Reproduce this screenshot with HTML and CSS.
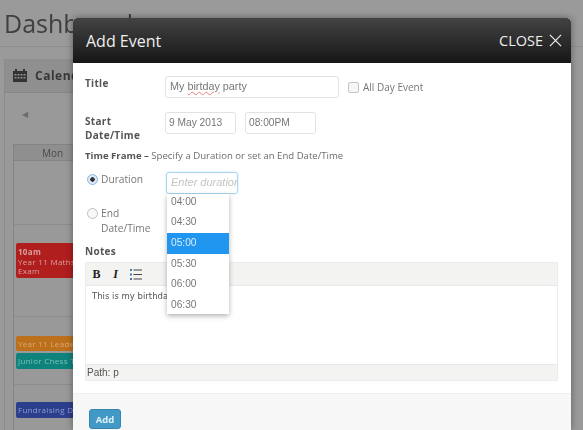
FILE: index.html
```html
<!DOCTYPE html>
<html>
<head>
    <title>Add Event</title>
    <link rel="stylesheet" href="styles.css">
</head>
<body>
    <div class="page">
        <header class="page-head">
            <h1>Dashboard</h1>
        </header>
        <section class="panel">
            <div class="panel-head">
                <svg class="cal-icon" viewBox="0 0 14 13" width="14" height="13">
                    <path fill="#333" d="M0 2h2V0h2v2h6V0h2v2h2v11H0z"/>
                    <path fill="#8f8f8f" d="M1.500 5h2v1.500h-2zM4.500 5h2v1.500h-2zM7.500 5h2v1.500h-2zM10.500 5h2v1.500h-2zM1.500 8h2v1.500h-2zM4.500 8h2v1.500h-2zM7.500 8h2v1.500h-2zM10.500 8h2v1.500h-2z"/>
                </svg>
                <span>Calendar</span>
            </div>
            <div class="cal-nav">&#9664;</div>
            <div class="cal-day">Mon</div>
            <div class="cal-col">
                <div class="slot slot-a"></div>
                <div class="event event-red"><b>10am</b><br>Year 11 Maths<br>Exam</div>
                <div class="slot slot-b"></div>
                <div class="event event-orange">Year 11 Leadership</div>
                <div class="event event-teal">Junior Chess Tournament</div>
                <div class="slot slot-c"></div>
                <div class="event event-blue">Fundraising Drive</div>
            </div>
        </section>
    </div>

    <div class="modal">
        <div class="modal-head">
            <h2>Add Event</h2>
            <span class="close">CLOSE
                <svg viewBox="0 0 14 14" width="13" height="13"><path d="M1 1l12 12M13 1L1 13" stroke="#eee" stroke-width="1.300" fill="none"/></svg>
            </span>
        </div>
        <form class="modal-body" action="javascript:void(0)">
            <div class="row row-title">
                <label class="field-label">Title</label>
                <div class="text-box title-box">My <span class="typo">birtday</span> party</div>
                <span class="check"></span>
                <span class="check-text">All Day Event</span>
            </div>
            <div class="row row-start">
                <label class="field-label">Start<br>Date/Time</label>
                <div class="text-box date-box">9 May 2013</div>
                <div class="text-box date-box">08:00PM</div>
            </div>
            <p class="hint"><b>Time Frame &#8211;</b> Specify a Duration or set an End Date/Time</p>
            <div class="row row-duration">
                <label class="radio-label"><span class="radio radio-on"></span>Duration</label>
                <div class="text-box duration-box">Enter duration</div>
                <ul class="menu">
                    <li>04:00</li>
                    <li>04:30</li>
                    <li class="active">05:00</li>
                    <li>05:30</li>
                    <li>06:00</li>
                    <li>06:30</li>
                </ul>
            </div>
            <div class="row row-end">
                <label class="radio-label"><span class="radio"></span>End<br>Date/Time</label>
            </div>
            <label class="field-label notes-label">Notes</label>
            <div class="editor">
                <div class="toolbar">
                    <span class="tool tool-b">B</span>
                    <span class="tool tool-i">I</span>
                    <svg viewBox="0 0 12 11" width="12" height="11">
                        <path fill="#4a76b8" d="M0 0h2v2H0zM0 4.500h2v2H0zM0 9h2v2H0z"/>
                        <path fill="#444" d="M3.500 .5H12v1H3.500zM3.500 5H12v1H3.500zM3.500 9.500H12v1H3.500z"/>
                    </svg>
                </div>
                <div class="editor-text">This is my birthday party</div>
                <div class="editor-path">Path: p</div>
            </div>
        </form>
        <div class="modal-foot">
            <button class="add-btn" type="button">Add</button>
        </div>
    </div>
</body>
</html>
```

FILE: styles.css
```css
html, body {
    margin: 0;
    padding: 0;
    height: 430px;
    overflow: hidden;
}
body {
    position: relative;
    background-color: #9a9a9a;
    font-family: "Open Sans", sans-serif;
    filter: blur(0.6px);
}

.page-head {
    height: 47px;
    border-bottom: 1px solid #8e8e8e;
    box-sizing: border-box;
    padding: 7px 0 0 4px;
}
.page-head h1 {
    margin: 0;
    font-size: 25px;
    line-height: 32px;
    font-weight: 400;
    color: #3f3f3f;
}
.panel {
    margin: 12px 0 0 4px;
    width: 300px;
    border-left: 1px solid #8a8a8a;
    background-color: #999;
}
.panel-head {
    height: 33px;
    display: flex;
    align-items: center;
    gap: 8px;
    padding-left: 8px;
    background-color: #8f8f8f;
    border-bottom: 1px solid #858585;
    font-size: 12px;
    font-weight: 700;
    letter-spacing: 0.5px;
    color: #383838;
}
.cal-nav {
    padding: 14px 0 0 17px;
    height: 37px;
    font-size: 8px;
    line-height: 14px;
    color: #6c6c6c;
}
.cal-day {
    margin-left: 8px;
    height: 17px;
    line-height: 16px;
    padding-left: 28px;
    box-sizing: border-box;
    border: 1px solid #848484;
    background-color: #8f8f8f;
    font-size: 10px;
    color: #4c4c4c;
}
.cal-col {
    margin-left: 8px;
    height: 270px;
    border-left: 1px solid #848484;
    padding-left: 2px;
}
.slot {
    border-bottom: 1px solid #8c8c8c;
    margin-left: -2px;
}
.slot-a { height: 63px; margin-bottom: 18px; }
.slot-b { height: 38px; margin-bottom: 19px; }
.slot-c { height: 15px; margin-bottom: 17px; }
.event {
    border-radius: 2px;
    font-size: 8px;
    line-height: 10px;
    letter-spacing: 0.3px;
    padding: 3px 2px;
    white-space: nowrap;
    overflow: hidden;
    box-sizing: border-box;
}
.event-red { height: 35px; background-color: #b01e1e; color: #d9a0a0; padding-top: 4px; line-height: 9.500px; }
.event-orange { height: 15px; margin-bottom: 2px; background-color: #bc701c; color: #d8a874; }
.event-teal { height: 16px; background-color: #0f827c; color: #7cc0bb; }
.event-blue { height: 16px; background-color: #2c3f8c; color: #8e9ad0; }

/* The dialog. */
.modal {
    position: absolute;
    left: 73px;
    top: 18px;
    width: 498px;
    height: 412px;
    overflow: hidden;
    background-color: #fff;
    border-radius: 4px 4px 0 0;
    box-shadow: 0 0 7px rgba(0, 0, 0, 0.4);
}
.modal-head {
    height: 45px;
    display: flex;
    align-items: center;
    justify-content: space-between;
    padding: 0 9px 0 13px;
    box-sizing: border-box;
    border-radius: 4px 4px 0 0;
    background: linear-gradient(#434343, #161616);
    color: #eee;
}
.modal-head h2 {
    margin: 0;
    font-size: 16px;
    font-weight: 400;
}
.close {
    display: flex;
    align-items: center;
    gap: 6px;
    font-size: 14.500px;
    font-weight: 500;
    line-height: 20px;
}
.modal-body {
    height: 330px;
    box-sizing: border-box;
    padding: 13px 12px 0;
    color: #666;
    font-size: 11px;
}
.row {
    display: flex;
    align-items: flex-start;
    position: relative;
}
.field-label {
    display: block;
    width: 80px;
    flex: none;
    font-weight: 700;
    font-size: 10px;
    line-height: 14px;
    letter-spacing: 0.3px;
    color: #555;
}
.text-box {
    box-sizing: border-box;
    height: 22px;
    line-height: 19px;
    padding: 0 3px;
    border: 1px solid #e2e2e2;
    border-radius: 3px;
    font-family: "Liberation Sans", sans-serif;
    font-size: 10.200px;
    color: #777;
    white-space: nowrap;
    overflow: hidden;
}
.title-box { width: 174px; padding-left: 4px; font-size: 10.800px; }
.row-title { height: 36px; }
.typo { text-decoration: underline wavy #e88080 1px; }
.check {
    width: 9px;
    height: 9px;
    margin: 6px 4px 0 9px;
    border: 1px solid #c4c4c4;
    border-radius: 2px;
    background-color: #f6f6f6;
}
.check-text { font-size: 10px; line-height: 22px; color: #777; }
.row-start { height: 37px; gap: 9px; }
.row-start .field-label { margin: 2px -9px 0 0; line-height: 14px; }
.date-box { width: 71px; }
.hint {
    margin: 0;
    font-size: 9.600px;
    line-height: 14px;
    color: #6e6e6e;
}
.hint b { color: #555; }
.row-duration { margin-top: 9px; height: 34px; }
.radio-label {
    display: block;
    position: relative;
    width: 81px;
    flex: none;
    padding-left: 16px;
    box-sizing: border-box;
    font-size: 10.200px;
    line-height: 15px;
    color: #777;
}
.radio {
    position: absolute;
    left: 2px;
    top: 2px;
    width: 9px;
    height: 9px;
    border: 1px solid #c0c0c0;
    border-radius: 50%;
    background-color: #f8f8f8;
}
.radio-on {
    border-color: #8ab4dc;
    background: radial-gradient(circle, #333 0 2px, #dceafa 2.500px);
}
.duration-box {
    width: 72px;
    padding-left: 4px;
    border: 1px solid #a8d4f0;
    box-shadow: 0 0 2px #b8def6;
    font-size: 11px;
    font-style: italic;
    color: #c4c4c4;
}
/* The list is scrolled a little, so its first row starts above the top edge. */
.menu {
    position: absolute;
    left: 82px;
    top: 22px;
    width: 62px;
    height: 120px;
    overflow: hidden;
    margin: 0;
    padding: 0;
    list-style: none;
    background-color: #fff;
    box-shadow: 0 2px 5px rgba(0, 0, 0, 0.3);
    font-family: "Liberation Sans", sans-serif;
    font-size: 10.200px;
    z-index: 2;
}
.menu li {
    height: 20.700px;
    line-height: 20.700px;
    padding-left: 4px;
    color: #777;
}
.menu li:first-child { margin-top: -2.500px; }
.menu li.active {
    background-color: #2196f0;
    color: #d8ecfb;
}
.row-end { height: 38px; }
.notes-label { margin-bottom: 4px; width: auto; }
.editor {
    position: relative;
    height: 119px;
    box-sizing: border-box;
    width: 473px;
    border: 1px solid #ececec;
    font-family: "Liberation Sans", sans-serif;
}
.toolbar {
    height: 23px;
    display: flex;
    align-items: center;
    gap: 10px;
    padding-left: 6px;
    box-sizing: border-box;
    background-color: #f3f3f2;
    border-bottom: 1px solid #e8e8e8;
}
.tool {
    width: 9px;
    font-family: "Liberation Serif", serif;
    font-weight: 700;
    font-size: 12px;
    color: #222;
    text-align: center;
}
.tool-i { font-style: italic; }
.editor-text {
    height: 79px;
    box-sizing: border-box;
    padding: 4px 6px 0;
    border-bottom: 1px solid #e8e8e8;
    font-family: "DejaVu Sans", sans-serif;
    font-size: 8.500px;
    line-height: 12px;
    color: #555;
}
.editor-path {
    height: 15px;
    line-height: 15px;
    padding-left: 1px;
    background-color: #f3f3f2;
    font-size: 10px;
    color: #555;
}
.modal-foot {
    height: 37px;
    box-sizing: border-box;
    padding: 15px 0 0 16px;
    background-color: #f7f7f7;
    border-top: 1px solid #f0f0f0;
}
.add-btn {
    display: block;
    width: 32px;
    height: 20px;
    padding: 0;
    border: 1px solid #3585ad;
    border-radius: 3px;
    background-color: #4299c6;
    color: #dff0f8;
    font-family: "Open Sans", sans-serif;
    font-size: 9.500px;
    font-weight: 700;
}
```
